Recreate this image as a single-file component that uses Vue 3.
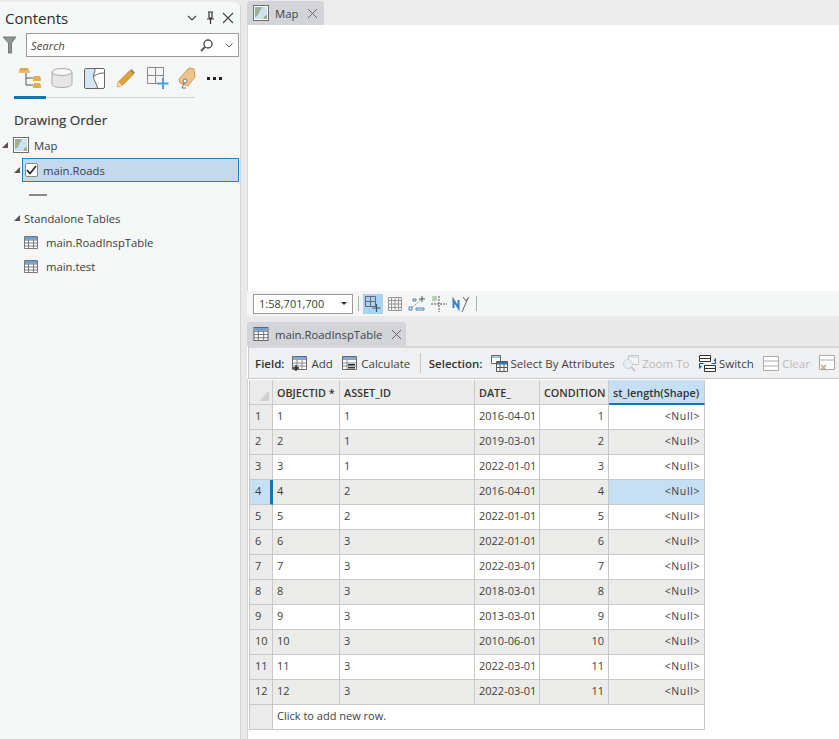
<script setup>
const rows = [
  [1, 1, '2016-04-01', 1], [2, 1, '2019-03-01', 2], [3, 1, '2022-01-01', 3],
  [4, 2, '2016-04-01', 4], [5, 2, '2022-01-01', 5], [6, 3, '2022-01-01', 6],
  [7, 3, '2022-03-01', 7], [8, 3, '2018-03-01', 8], [9, 3, '2013-03-01', 9],
  [10, 3, '2010-06-01', 10], [11, 3, '2022-03-01', 11], [12, 3, '2022-03-01', 11],
]
</script>

<template>
  <div class="app">
    <aside class="contents">
      <header class="c-head">
        <span class="c-title">Contents</span>
        <div class="c-actions">
          <svg width="12" height="12" viewBox="0 0 12 12"><path d="M2 4l4 4 4-4" fill="none" stroke="#444" stroke-width="1.2"/></svg>
          <svg width="12" height="14" viewBox="0 0 12 14"><path d="M4 1h5M5 1v6M8 1v6M3 8h7M6.500 8v5M5 7h3" fill="none" stroke="#333" stroke-width="1.2"/></svg>
          <svg width="12" height="12" viewBox="0 0 12 12"><path d="M1 1l10 10M11 1L1 11" stroke="#444" stroke-width="1.1"/></svg>
        </div>
      </header>
      <div class="c-search">
        <svg width="16" height="18" viewBox="0 0 16 18"><path d="M1 1h13L9.500 7v10h-3V7z" fill="#8a9a90" stroke="#777"/></svg>
        <div class="search-box">
          <span class="search-ph">Search</span>
          <svg width="15" height="15" viewBox="0 0 15 15"><circle cx="9" cy="6" r="4" fill="none" stroke="#555" stroke-width="1.500"/><path d="M6 9l-4 4" stroke="#555" stroke-width="2"/></svg>
          <svg class="search-caret" width="10" height="10" viewBox="0 0 10 10"><path d="M1.500 3.500L5 7l3.500-3.500" fill="none" stroke="#555"/></svg>
        </div>
      </div>
      <div class="c-tabs">
        <div class="c-tab active">
          <svg width="24" height="24" viewBox="0 0 24 24"><path d="M8 6v13h7M8 12h7" fill="none" stroke="#555"/><path d="M1 5l1-3h8l1 3z" fill="#e0a94f"/><rect x="1" y="5" width="11" height="2" fill="#e9bd72"/><path d="M15 13l1-3h6l1 3v2h-8zM15 20l1-3h6l1 3v2h-8z" fill="#e3ad56"/></svg>
        </div>
        <div class="c-tab">
          <svg width="22" height="22" viewBox="0 0 22 22"><path d="M1 5v12c0 2 4 3.500 10 3.500S21 19 21 17V5z" fill="#e6e6e6" stroke="#aaa"/><ellipse cx="11" cy="5" rx="10" ry="3.500" fill="#f6f6f6" stroke="#aaa"/></svg>
        </div>
        <div class="c-tab">
          <svg width="21" height="21" viewBox="0 0 21 21"><rect x=".5" y=".5" width="20" height="20" rx="1.500" fill="#fff" stroke="#666"/><path d="M1 1h10c.5 3-2 5-1.500 8 .5 4 3 6 4 11H1z" fill="#d4e6f5"/><path d="M11 1c.5 3-2 5-1.500 8 .5 4 3 6 4 11M10 8c3-2 6-3 10-3" fill="none" stroke="#666"/></svg>
        </div>
        <div class="c-tab">
          <svg width="22" height="22" viewBox="0 0 22 22"><path d="M2 20l1.500-5L15 3.500l3.500 3.500L7 18.500z" fill="#e3a33c" stroke="#c08428"/><path d="M15 3.500l1.500-1.500 3.500 3.500L18.500 7z" fill="#888"/><path d="M2 20l1.500-5 3.500 3.500z" fill="#f2dfb8"/></svg>
        </div>
        <div class="c-tab">
          <svg width="24" height="24" viewBox="0 0 24 24"><path d="M1.500 1.500h16v16h-16zM1.500 9.500h16M9.500 1.500v16" fill="none" stroke="#888"/><path d="M17 12v11M11.500 17.500h11" stroke="#4a9fd8" stroke-width="2"/></svg>
        </div>
        <div class="c-tab tag">
          <svg width="18" height="23" viewBox="0 0 18 23"><path d="M11 1l5 1 1 8-7 9-8-3-1-4z" fill="#edc58c" stroke="#c89a58"/><circle cx="7" cy="14" r="2" fill="#fff" stroke="#777"/><path d="M6 16l-2 5h4" fill="none" stroke="#777"/></svg>
        </div>
        <div class="c-tab more"><i></i><i></i><i></i></div>
      </div>
      <div class="c-rule"><span></span></div>
      <h2 class="c-section">Drawing Order</h2>
      <div class="tree">
        <div class="node n-map">
          <span class="twisty"></span>
          <svg width="16" height="16" viewBox="0 0 17 17"><rect x=".5" y=".5" width="16" height="16" fill="#fff" stroke="#666"/><rect x="2" y="2" width="13" height="13" fill="#cfe3ee"/><path d="M2 2h8L7 7l-2 4-3 2zM11 15l1-3 3-2v5z" fill="#9db096"/></svg>
          <span>Map</span>
        </div>
        <div class="node n-layer">
          <span class="twisty"></span>
          <div class="selected">
            <span class="check"><svg width="11" height="10" viewBox="0 0 11 10"><path d="M1 5l3 3.500L10 1" fill="none" stroke="#222" stroke-width="1.700"/></svg></span>
            <span>main.Roads</span>
          </div>
        </div>
        <div class="legend"><span></span></div>
        <div class="node n-stand">
          <span class="twisty"></span>
          <span>Standalone Tables</span>
        </div>
        <div class="node n-table">
          <svg class="tbl" width="14" height="13" viewBox="0 0 14 13"><path d="M.5.5h13v12H.5z" fill="#fff" stroke="#777"/><path d="M1 1h12v2.500H1z" fill="#6a9fd0"/><path d="M.5 4h13M.5 7h13M.5 10h13M4.500 4v9M9.500 4v9" stroke="#777"/></svg>
          <span>main.RoadInspTable</span>
        </div>
        <div class="node n-table">
          <svg class="tbl" width="14" height="13" viewBox="0 0 14 13"><path d="M.5.5h13v12H.5z" fill="#fff" stroke="#777"/><path d="M1 1h12v2.500H1z" fill="#6a9fd0"/><path d="M.5 4h13M.5 7h13M.5 10h13M4.500 4v9M9.500 4v9" stroke="#777"/></svg>
          <span>main.test</span>
        </div>
      </div>
    </aside>

    <main class="work">
      <section class="map-pane">
        <div class="tabstrip">
          <div class="doc-tab map-tab">
            <svg width="16" height="16" viewBox="0 0 17 17"><rect x=".5" y=".5" width="16" height="16" fill="#fff" stroke="#666"/><rect x="2" y="2" width="13" height="13" fill="#cfe3ee"/><path d="M2 2h8L7 7l-2 4-3 2zM11 15l1-3 3-2v5z" fill="#9db096"/></svg>
            <span>Map</span>
            <svg class="close" width="11" height="11" viewBox="0 0 11 11"><path d="M1 1l9 9M10 1l-9 9" stroke="#666"/></svg>
          </div>
        </div>
        <div class="canvas"></div>
        <div class="statusbar">
          <div class="scale"><span>1:58,701,700</span><i></i></div>
          <span class="sep"></span>
          <span class="st-btn on"><svg width="18" height="18" viewBox="0 0 18 18"><path d="M1.500 1.500h10v10h-10zM1.500 6.500h10M6.500 1.500v10" fill="none" stroke="#667"/><path d="M12.500 9v8M8.500 13h8" stroke="#456" stroke-width="1.200"/></svg></span>
          <span class="st-btn"><svg width="14" height="14" viewBox="0 0 14 14"><path d="M.5.5h13v13H.5zM.5 3.500h13M.5 7h13M.5 10.500h13M3.500.5v13M7 .5v13M10.500.5v13" fill="none" stroke="#999"/></svg></span>
          <span class="st-btn"><svg width="18" height="18" viewBox="0 0 18 18"><path d="M2 14L14 4" stroke="#999" stroke-dasharray="2 1"/><path d="M1 12h3v3H1zM8 13h8v2H8zM5 4h3v2H5z" fill="#fff" stroke="#4a7fb0"/><path d="M14 1v6M11 4h6" stroke="#555"/></svg></span>
          <span class="st-btn"><svg width="18" height="18" viewBox="0 0 18 18"><path d="M2 1h5v5H2z" fill="#bcd0b8"/><path d="M9 1v16M1 9h16" stroke="#555" stroke-dasharray="2 1"/></svg></span>
          <span class="st-btn n"><svg width="18" height="18" viewBox="0 0 18 18"><path d="M1.500 13V5l5 8V5" fill="none" stroke="#3a80c0" stroke-width="2"/><path d="M10 17L16 3M11 2l3 4 3-4" fill="none" stroke="#666"/></svg></span>
          <span class="sep"></span>
        </div>
      </section>

      <section class="table-pane">
        <div class="tabstrip t2">
          <div class="doc-tab tbl-tab">
            <svg width="16" height="14" viewBox="0 0 14 13"><path d="M.5.5h13v12H.5z" fill="#fff" stroke="#666"/><path d="M1 1h12v2.500H1z" fill="#6a9fd0"/><path d="M.5 4h13M.5 7h13M.5 10h13M4.500 4v9M9.500 4v9" stroke="#777"/></svg>
            <span>main.RoadInspTable</span>
            <svg class="close" width="11" height="11" viewBox="0 0 11 11"><path d="M1 1l9 9M10 1l-9 9" stroke="#666"/></svg>
          </div>
        </div>
        <div class="ribbon">
          <b>Field:</b>
          <span class="r-item"><svg width="16" height="15" viewBox="0 0 16 15"><path d="M.5.5h14v13H.5z" fill="#fff" stroke="#666"/><path d="M1 1h13v3H1z" fill="#7fa9d4"/><path d="M.5 7h14M.5 10h14M5 4v9M10 4v9" stroke="#888"/><path d="M4 9v6M1 12h6" stroke="#222" stroke-width="1.300"/></svg>Add</span>
          <span class="r-item"><svg width="16" height="15" viewBox="0 0 16 15"><path d="M.5.5h14v13H.5z" fill="#fff" stroke="#666"/><path d="M1 1h13v3H1z" fill="#7fa9d4"/><path d="M.5 7h14M.5 10h14M5 4v9" stroke="#888"/><path d="M6 8h7v1.500H6zM6 11h7v1.500H6z" fill="#333"/></svg>Calculate</span>
          <span class="r-sep"></span>
          <b>Selection:</b>
          <span class="r-item r-select"><svg width="17" height="17" viewBox="0 0 17 17"><path d="M.5.5h9v8h-9z" fill="#fff" stroke="#666"/><path d="M1 1h8v2H1z" fill="#9cc"/><path d="M5.500 6.500h11v10h-11z" fill="#fff" stroke="#555"/><path d="M6 7h10v2.500H6z" fill="#3a75ad"/><path d="M5.500 12.500h11M9 9v8M13 9v8" stroke="#555"/></svg>Select By Attributes</span>
          <span class="r-item off"><svg width="17" height="17" viewBox="0 0 17 17" opacity=".45"><path d="M6.500.5h10v9h-10z" fill="#fff" stroke="#999"/><path d="M7 1h9v2H7z" fill="#b9d3ea"/><circle cx="6" cy="9" r="4.500" fill="#dceaf5" stroke="#9ab"/><path d="M9 12l4 4" stroke="#999" stroke-width="2"/></svg>Zoom To</span>
          <span class="r-item"><svg width="17" height="17" viewBox="0 0 17 17"><path d="M.5.500h11v3h-11zM.5 3.500h11v3h-11zM5.500 10.500h11v3h-11zM5.500 13.500h11v3h-11z" fill="#fff" stroke="#333"/><path d="M12.500 8.500h4V4M15 6l1.500-2L18 6M4.500 8.500H.5V13M-.5 11l1 2 2-2" fill="none" stroke="#1c5f96" stroke-width="1.200"/></svg>Switch</span>
          <span class="r-item off"><svg width="16" height="15" viewBox="0 0 16 15"><path d="M.5.5h15v14H.5zM.5 5h15M.5 10h15" fill="#fff" stroke="#aaa"/></svg>Clear</span>
          <span class="r-item off"><svg width="16" height="16" viewBox="0 0 16 16"><path d="M.5.5h15v14H.5zM.5 5h15" fill="#fff" stroke="#aaa"/><path d="M2 10l5 5M7 10l-5 5" stroke="#b8aa90" stroke-width="1.500"/></svg></span>
        </div>
        <div class="grid-wrap">
          <div class="grid">
            <div class="cell corner"><i></i></div>
            <div class="cell head">OBJECTID *</div>
            <div class="cell head">ASSET_ID</div>
            <div class="cell head">DATE_</div>
            <div class="cell head">CONDITION</div>
            <div class="cell head sel-head">st_length(Shape)</div>
            <template v-for="(r, i) in rows" :key="r[0]">
              <div class="cell rowhead" :class="{ current: i === 3 }">{{ r[0] }}</div>
              <div class="cell" :class="{ alt: i % 2 === 1 }">{{ r[0] }}</div>
              <div class="cell" :class="{ alt: i % 2 === 1 }">{{ r[1] }}</div>
              <div class="cell" :class="{ alt: i % 2 === 1 }">{{ r[2] }}</div>
              <div class="cell num" :class="{ alt: i % 2 === 1 }">{{ r[3] }}</div>
              <div class="cell num null" :class="{ alt: i % 2 === 1, hl: i === 3 }">&lt;Null&gt;</div>
            </template>
            <div class="cell rowhead last"></div>
            <div class="cell addrow">Click to add new row.</div>
          </div>
        </div>
      </section>
    </main>
  </div>
</template>

<style>
html, body { margin: 0; background: #e9e9e9; }
</style>

<style scoped>
.app {
  width: 839px;
  height: 739px;
  overflow: hidden;
  display: grid;
  grid-template-columns: 241px 1fr;
  column-gap: 6px;
  background: #e9e9e9;
  font-family: "Open Sans", "Noto Sans", sans-serif;
  font-size: 11.3px;
  color: #3c3c3c;
}
.contents {
  margin-top: 2px;
  height: 737px;
  box-sizing: border-box;
  background: #f5f7f7;
  border-top-right-radius: 5px;
  border-right: 1px solid #d4d6d6;
}
.c-head {
  height: 31px;
  display: flex;
  align-items: center;
  justify-content: space-between;
  padding: 0 6px 0 5px;
}
.c-title { font-size: 15px; color: #2b2b2b; }
.c-actions { display: flex; align-items: center; gap: 6px; }
.c-search {
  height: 24px;
  display: flex;
  align-items: center;
  gap: 8px;
  padding-left: 2px;
}
.search-box {
  box-sizing: border-box;
  width: 213px;
  height: 24px;
  background: #fff;
  border: 1px solid #9a9a9a;
  display: flex;
  align-items: center;
  padding: 0 4px 0 4px;
  gap: 8px;
}
.search-ph { flex: 1; font-style: italic; color: #444; }
.search-caret { margin-left: 2px; }
.c-tabs {
  display: flex;
  align-items: center;
  height: 30px;
  margin-top: 6px;
  padding-left: 18px;
  gap: 8px;
}
.c-tab { width: 24px; height: 24px; display: flex; align-items: center; justify-content: center; }
.tag { width: 18px; margin-right: 2px; }
.more { gap: 3px; width: 15px; margin-left: 1px; }
.more i { flex: none; width: 3px; height: 3px; background: #222; }
.c-rule {
  margin: 3px 0 0 14px;
  width: 181px;
  height: 3px;
  background: linear-gradient(#f5f7f7 1px, #cfd2d2 1px, #cfd2d2 2px, #f5f7f7 2px);
  position: relative;
}
.c-rule span { position: absolute; left: 0; top: 0; width: 32px; height: 3px; background: #0f76b8; }
.c-section {
  margin: 11px 0 0 14px;
  font-size: 13.5px;
  font-weight: 400;
  -webkit-text-stroke: .2px #3c3c3c;
  line-height: 20px;
  color: #3a3a3a;
}
.tree { margin-top: 3px; }
.node { display: flex; align-items: center; }
.twisty {
  width: 0; height: 0;
  border-style: solid;
  border-width: 0 0 6px 6px;
  border-color: transparent transparent #555 transparent;
}
.n-map { height: 24px; padding-left: 2px; gap: 5px; }
.n-layer { height: 26px; padding-left: 14px; }
.selected {
  margin-left: 2px;
  flex: 1;
  margin-right: 1px;
  box-sizing: border-box;
  height: 24px;
  background: #c2d9ee;
  border: 1px solid #1b80c4;
  display: flex;
  align-items: center;
  padding-left: 2px;
  gap: 5px;
}
.check {
  box-sizing: border-box;
  width: 13px; height: 14px;
  background: #fff;
  border: 1px solid #888;
  border-radius: 2px;
  display: flex;
  align-items: center;
  justify-content: center;
}
.check svg { flex: none; }
.legend { height: 22px; padding-left: 29px; display: flex; align-items: center; }
.legend span { width: 18px; height: 2px; margin-top: 1px; background: #888; }
.n-stand { height: 24px; padding-left: 14px; gap: 4px; margin-top: 1px; }
.n-table { height: 24px; padding-left: 24px; gap: 8px; }
.tbl { flex: none; }

.work { display: flex; flex-direction: column; min-width: 0; }
.map-pane { height: 316px; display: flex; flex-direction: column; }
.tabstrip { height: 25px; display: flex; align-items: flex-end; background: #ececec; }
.doc-tab {
  height: 24px;
  box-sizing: border-box;
  background: #d2d4d8;
  border-radius: 3px 3px 0 0;
  display: flex;
  align-items: center;
  color: #3f3f4a;
}
.map-tab { width: 77px; padding-left: 6px; gap: 6px; }
.close { margin-left: 3px; }
.canvas { flex: 1; background: #fff; border-left: 1px solid #d9d9d9; }
.statusbar {
  height: 25px;
  background: #f4f5f5;
  display: flex;
  align-items: center;
  padding-left: 6px;
}
.scale {
  box-sizing: border-box;
  width: 100px;
  height: 20px;
  background: #fff;
  border: 1px solid #999;
  display: flex;
  align-items: center;
  justify-content: space-between;
  padding: 0 5px 0 5px;
  font-size: 11px;
}
.scale i { width: 0; height: 0; border-left: 3px solid transparent; border-right: 3px solid transparent; border-top: 3px solid #333; }
.sep { width: 1px; height: 15px; background: #a8b8a8; margin: 0 4px 0 5px; }
.st-btn { width: 20px; height: 20px; display: flex; align-items: center; justify-content: center; margin-right: 2px; }
.st-btn.on { background: #a8d4f2; }
.st-btn.n { margin-right: 0; }

.table-pane { flex: 1; display: flex; flex-direction: column; background: #fff; min-height: 0; }
.t2 { height: 30px; background: #e9e9e9; }
.tbl-tab { width: 159px; padding-left: 6px; gap: 6px; }
.ribbon {
  height: 33px;
  flex: none;
  box-sizing: border-box;
  margin-left: 1px;
  background: #eff0f2;
  border-top: 2px solid #d8d8d8;
  border-bottom: 1px solid #c8c8c8;
  border-left: 1px solid #ccc;
  display: flex;
  align-items: center;
  padding-left: 6px;
  font-size: 11.5px;
  white-space: nowrap;
  overflow: hidden;
}
.ribbon b { flex: none; font-weight: 600; color: #333; margin-right: 8px; }
.r-item { flex: none; display: inline-flex; align-items: center; gap: 3px; margin-right: 9.5px; color: #3f3f3f; }
.r-select { margin-right: 7.5px; }
.r-item.off { color: #b9b9b9; }
.r-sep { flex: none; width: 1px; height: 20px; background: #c6c6c6; margin: 0 8px 0 0; }
.grid-wrap { padding: 1px 0 0 1px; background: #fff; flex: 1; border-left: 1px solid #d4d4d4; }
.grid {
  display: grid;
  width: 456px;
  grid-template-columns: 24px 67px 135px 65px 69px 96px;
  grid-auto-rows: 25px;
}
.cell {
  box-sizing: border-box;
  display: flex;
  align-items: center;
  padding: 0 4px 3px;
  border-right: 1px solid #c9c9c9;
  border-bottom: 1px solid #c9c9c9;
  background: #fff;
  font-size: 11px;
  color: #3e3e3e;
  white-space: nowrap;
}
.alt { background: #ebebea; }
.corner, .head, .rowhead { background: #ebebeb; }
.corner { position: relative; border-left: 1px solid #c9c9c9; }
.corner i {
  position: absolute; right: 3px; bottom: 3px;
  width: 0; height: 0;
  border-style: solid;
  border-width: 0 0 10px 10px;
  border-color: transparent transparent #d0d0d0 transparent;
}
.head { font-weight: 600; font-size: 10.8px; color: #333; padding: 1px 3px 0 4px; }
.sel-head { background: #c5e0f5; border-bottom: 2px solid #0f76b8; }
.rowhead { border-left: 1px solid #c9c9c9; padding-left: 5px; }
.rowhead.current { background: #c5e0f5; border-right: 3px solid #0f76b8; }
.num { justify-content: flex-end; }
.null { font-size: 10.5px; letter-spacing: .6px; }
.hl { background: #c5e0f5; }
.addrow { grid-column: 2 / span 5; }
</style>
